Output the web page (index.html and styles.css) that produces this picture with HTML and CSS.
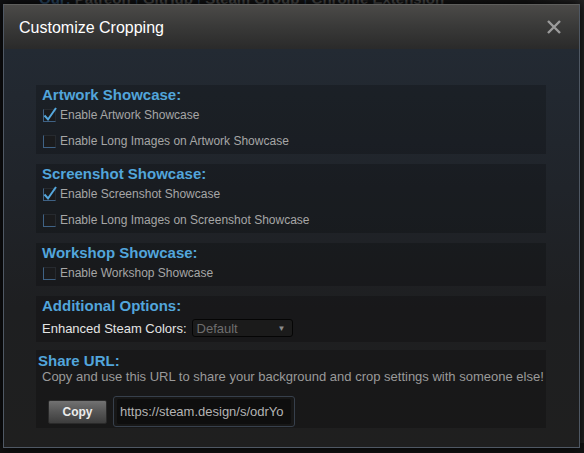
FILE: index.html
```html
<!DOCTYPE html>
<html>
<head>
<meta charset="utf-8">
<link rel="stylesheet" href="styles.css">
</head>
<body>
<div class="backdrop">
  <div class="bg-links"><span class="our">Our:</span> Patreon <span class="sep">|</span> GitHub <span class="sep">|</span> Steam Group <span class="sep">|</span> Chrome Extension</div>
</div>
<div class="modal">
  <div class="modal-header">
    <div class="modal-title">Customize Cropping</div>
    <svg class="close" width="14" height="14" viewBox="0 0 14 14"><path d="M1 1 L13 13 M13 1 L1 13" stroke="#9b9b9b" stroke-width="2.4" stroke-linecap="butt" fill="none"/></svg>
  </div>
  <div class="modal-body">
    <div class="section">
      <div class="sec-title">Artwork Showcase:</div>
      <div class="opt"><span class="cb checked"><svg class="tick" width="14" height="16" viewBox="0 0 14 16"><path d="M1.5 9.5 L5 13.5 L13 2" stroke="#55a7dc" stroke-width="2" fill="none"/></svg></span><span class="lbl">Enable Artwork Showcase</span></div>
      <div class="opt"><span class="cb"></span><span class="lbl">Enable Long Images on Artwork Showcase</span></div>
    </div>
    <div class="section">
      <div class="sec-title">Screenshot Showcase:</div>
      <div class="opt"><span class="cb checked"><svg class="tick" width="14" height="16" viewBox="0 0 14 16"><path d="M1.5 9.5 L5 13.5 L13 2" stroke="#55a7dc" stroke-width="2" fill="none"/></svg></span><span class="lbl">Enable Screenshot Showcase</span></div>
      <div class="opt"><span class="cb"></span><span class="lbl">Enable Long Images on Screenshot Showcase</span></div>
    </div>
    <div class="section">
      <div class="sec-title">Workshop Showcase:</div>
      <div class="opt"><span class="cb"></span><span class="lbl">Enable Workshop Showcase</span></div>
    </div>
    <div class="section sec-add">
      <div class="sec-title">Additional Options:</div>
      <div class="colors-row">
        <span class="colors-lbl">Enhanced Steam Colors:</span>
        <div class="select"><span class="sel-val">Default</span><span class="sel-arrow">▼</span></div>
      </div>
    </div>
    <div class="section sec-share">
      <div class="sec-title">Share URL:</div>
      <div class="share-desc">Copy and use this URL to share your background and crop settings with someone else!</div>
      <div class="share-row">
        <div class="btn">Copy</div>
        <div class="url-wrap"><div class="url">https://steam.design/s/odrYo</div></div>
      </div>
    </div>
  </div>
</div>
</body>
</html>
```

FILE: styles.css
```css
html, body {
  margin: 0;
  padding: 0;
  width: 584px;
  height: 453px;
  overflow: hidden;
  background: #121212;
  font-family: "Liberation Sans", Arial, sans-serif;
}
.backdrop {
  height: 453px;
  background: linear-gradient(to right, #0f1012 0%, #141414 90%, #242424 100%);
}
.bg-links {
  margin-top: -10px;
  padding-left: 39px;
  font-size: 15px;
  font-weight: bold;
  line-height: 17px;
  color: #4a4a4a;
  white-space: nowrap;
}
.bg-links .our { color: #2b4a68; }
.bg-links .sep { color: #284059; font-weight: normal; }

.modal {
  position: absolute;
  left: 3px;
  top: 4px;
  width: 577px;
  height: 444px;
  box-sizing: border-box;
  border: 1px solid #4f5864;
  border-top-color: #5e5e5c;
  display: flex;
  flex-direction: column;
  box-shadow: 0 0 10px #000;
}
.modal-header {
  height: 44px;
  flex: none;
  box-sizing: border-box;
  padding: 0 18px 0 15px;
  display: flex;
  align-items: center;
  justify-content: space-between;
  background: linear-gradient(to bottom, #4b4a48 0%, #393938 50%, #2a2a2a 100%);
}
.modal-title {
  font-size: 16px;
  line-height: 20px;
  color: #ffffff;
  padding-top: 1px;
}
.close { display: block; }

.modal-body {
  flex: 1;
  padding: 36px 33px 0 32px;
  background: linear-gradient(to bottom, #232a33 0%, #20242a 35%, #1e1f21 65%, #1f1f1f 100%);
}
.section {
  background: rgba(0, 0, 0, 0.2);
  padding: 2px 6px 0 6px;
  margin-bottom: 10px;
}
.sec-title {
  font-size: 15px;
  font-weight: bold;
  line-height: 15px;
  color: #52a5db;
}
.opt {
  height: 26px;
  display: flex;
  align-items: center;
}
.cb {
  position: relative;
  width: 13px;
  height: 13px;
  box-sizing: border-box;
  margin-left: 1px;
  margin-right: 4px;
  margin-top: 1px;
  background: #1a1b1d;
  border: 1px solid #262a2f;
  border-left-color: #3f6285;
  border-bottom-color: #3f6285;
  flex: none;
}
.tick {
  position: absolute;
  left: -1px;
  top: -4px;
}
.lbl {
  font-size: 12px;
  color: #a6a6a6;
  line-height: 14px;
}
.sec-add { margin-bottom: 8px; padding-bottom: 1px; }
.colors-row {
  margin-top: 2px;
  height: 26px;
  display: flex;
  align-items: center;
}
.colors-lbl {
  font-size: 13px;
  color: #e4e4e4;
  margin-right: 5px;
}
.select {
  width: 101px;
  height: 18px;
  box-sizing: border-box;
  border: 1px solid #050505;
  border-radius: 3px;
  background: #1b1b1b;
  display: flex;
  align-items: center;
  justify-content: space-between;
  padding: 0 6px 0 4px;
}
.sel-val {
  font-size: 13px;
  color: #6e6e6e;
}
.sel-arrow {
  font-size: 8px;
  color: #8c8c8c;
}
.sec-share {
  padding: 3px 2px 1px 2px;
  margin-bottom: 0;
}
.share-desc {
  margin-left: 4px;
  font-size: 13px;
  line-height: 17px;
  color: #9a9a9a;
  white-space: nowrap;
}
.share-row {
  margin-top: 11px;
  margin-left: 10px;
  display: flex;
  align-items: center;
  gap: 6px;
}
.btn {
  width: 59px;
  height: 24px;
  box-sizing: border-box;
  border: 1px solid #2a2a2a;
  border-radius: 2px;
  background: linear-gradient(to bottom, #727272 0%, #555555 50%, #3d3d3d 100%);
  color: #ececec;
  font-size: 12px;
  font-weight: bold;
  display: flex;
  align-items: center;
  justify-content: center;
}
.url-wrap {
  width: 182px;
  height: 31px;
  box-sizing: border-box;
  border: 1px solid #37404c;
  border-radius: 3px;
  background: #171717;
  padding: 2px 3px;
}
.url {
  height: 100%;
  background: #0e0e0e;
  border-radius: 2px;
  font-size: 13px;
  line-height: 25px;
  color: #b4b4b4;
  padding-left: 3px;
  white-space: nowrap;
  overflow: hidden;
}
```
